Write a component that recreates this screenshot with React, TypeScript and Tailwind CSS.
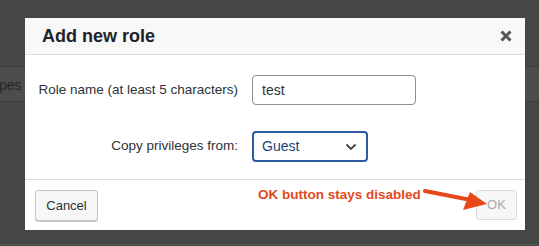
import React from 'react';

const font = { fontFamily: '"Liberation Sans", Arial, sans-serif' };

function Chevron() {
  return (
    <svg width="12" height="8" viewBox="0 0 12 8" className="text-[#3c434a]">
      <path d="M1.5 1.5 L6 6 L10.5 1.5" fill="none" stroke="currentColor" strokeWidth="1.8" />
    </svg>
  );
}

function CloseIcon() {
  return (
    <svg width="12" height="12" viewBox="0 0 12 12" className="text-[#555]">
      <path d="M1.5 1.5 L10.5 10.5 M10.5 1.5 L1.5 10.5" stroke="currentColor" strokeWidth="3" />
    </svg>
  );
}

export default function App() {
  return (
    <div className="relative w-[539px] h-[246px] overflow-hidden bg-[#464646]" style={font}>
      {/* page behind the backdrop */}
      <div className="absolute left-0 right-0 top-[66px] h-[36px] border-y border-[#3b3b3b] bg-[#4c4c4c] flex items-center text-[14px] text-[#262626]">
        <span className="-ml-[1px] mt-[2px]">pes t</span>
      </div>
      <div className="absolute left-0 right-0 bottom-[1px] h-px bg-[#555]" />

      {/* dialog */}
      <div className="relative ml-[25px] mt-[18px] w-[500px] h-[212px] bg-white flex flex-col">
        <div className="h-[37px] shrink-0 bg-[#f8f8f8] border-b border-[#dcdcde] flex items-center justify-between pl-[17px] pr-[13px]">
          <h1 className="text-[18px] font-bold text-[#1d2327] leading-none">Add new role</h1>
          <CloseIcon />
        </div>

        <div className="flex-1 pt-[20px] pl-[13px]">
          <div className="grid grid-cols-[200px_auto] justify-start gap-x-[14px] gap-y-[26px] items-center">
            <label className="text-[13.5px] text-[#2c3338] text-right whitespace-nowrap">Role name (at least 5 characters)</label>
            <div className="w-[164px] h-[30px] border border-[#8c8f94] rounded-[4px] flex items-center px-[9px] text-[14px] text-[#2c3338]">
              test
            </div>
            <label className="text-[13.5px] text-[#2c3338] text-right whitespace-nowrap">Copy privileges from:</label>
            <div className="w-[116px] h-[31px] border-2 border-[#2c5aa0] rounded-[4px] flex items-center justify-between pl-[8px] pr-[9px] text-[14px] text-[#1e4477]">
              <span>Guest</span>
              <Chevron />
            </div>
          </div>
        </div>

        <div className="relative h-[51px] shrink-0 border-t border-[#dcdcde] flex items-start justify-between pt-[10px] pl-[10px] pr-[8px]">
          <button className="w-[63px] h-[31px] rounded-[3px] border border-[#c3c4c7] bg-[#f6f7f7] text-[13px] text-[#2c3338] shadow-[0_1px_0_#ccc]">
            Cancel
          </button>
          <span className="absolute left-[233px] top-[5px] text-[13.5px] font-bold text-[#e04a1c]">OK button stays disabled</span>
          <svg className="absolute left-[398px] top-[5px]" width="70" height="28" viewBox="0 0 70 28">
            <path d="M2 6 L48 15" stroke="#e8471a" strokeWidth="4" strokeLinecap="round" />
            <polygon points="47,7 64,19 40,25" fill="#e8471a" />
          </svg>
          <button className="w-[41px] h-[30px] rounded-[3px] border border-[#dcdcde] bg-[#f6f7f7] text-[13px] text-[#a7aaad]">
            OK
          </button>
        </div>
      </div>
    </div>
  );
}
